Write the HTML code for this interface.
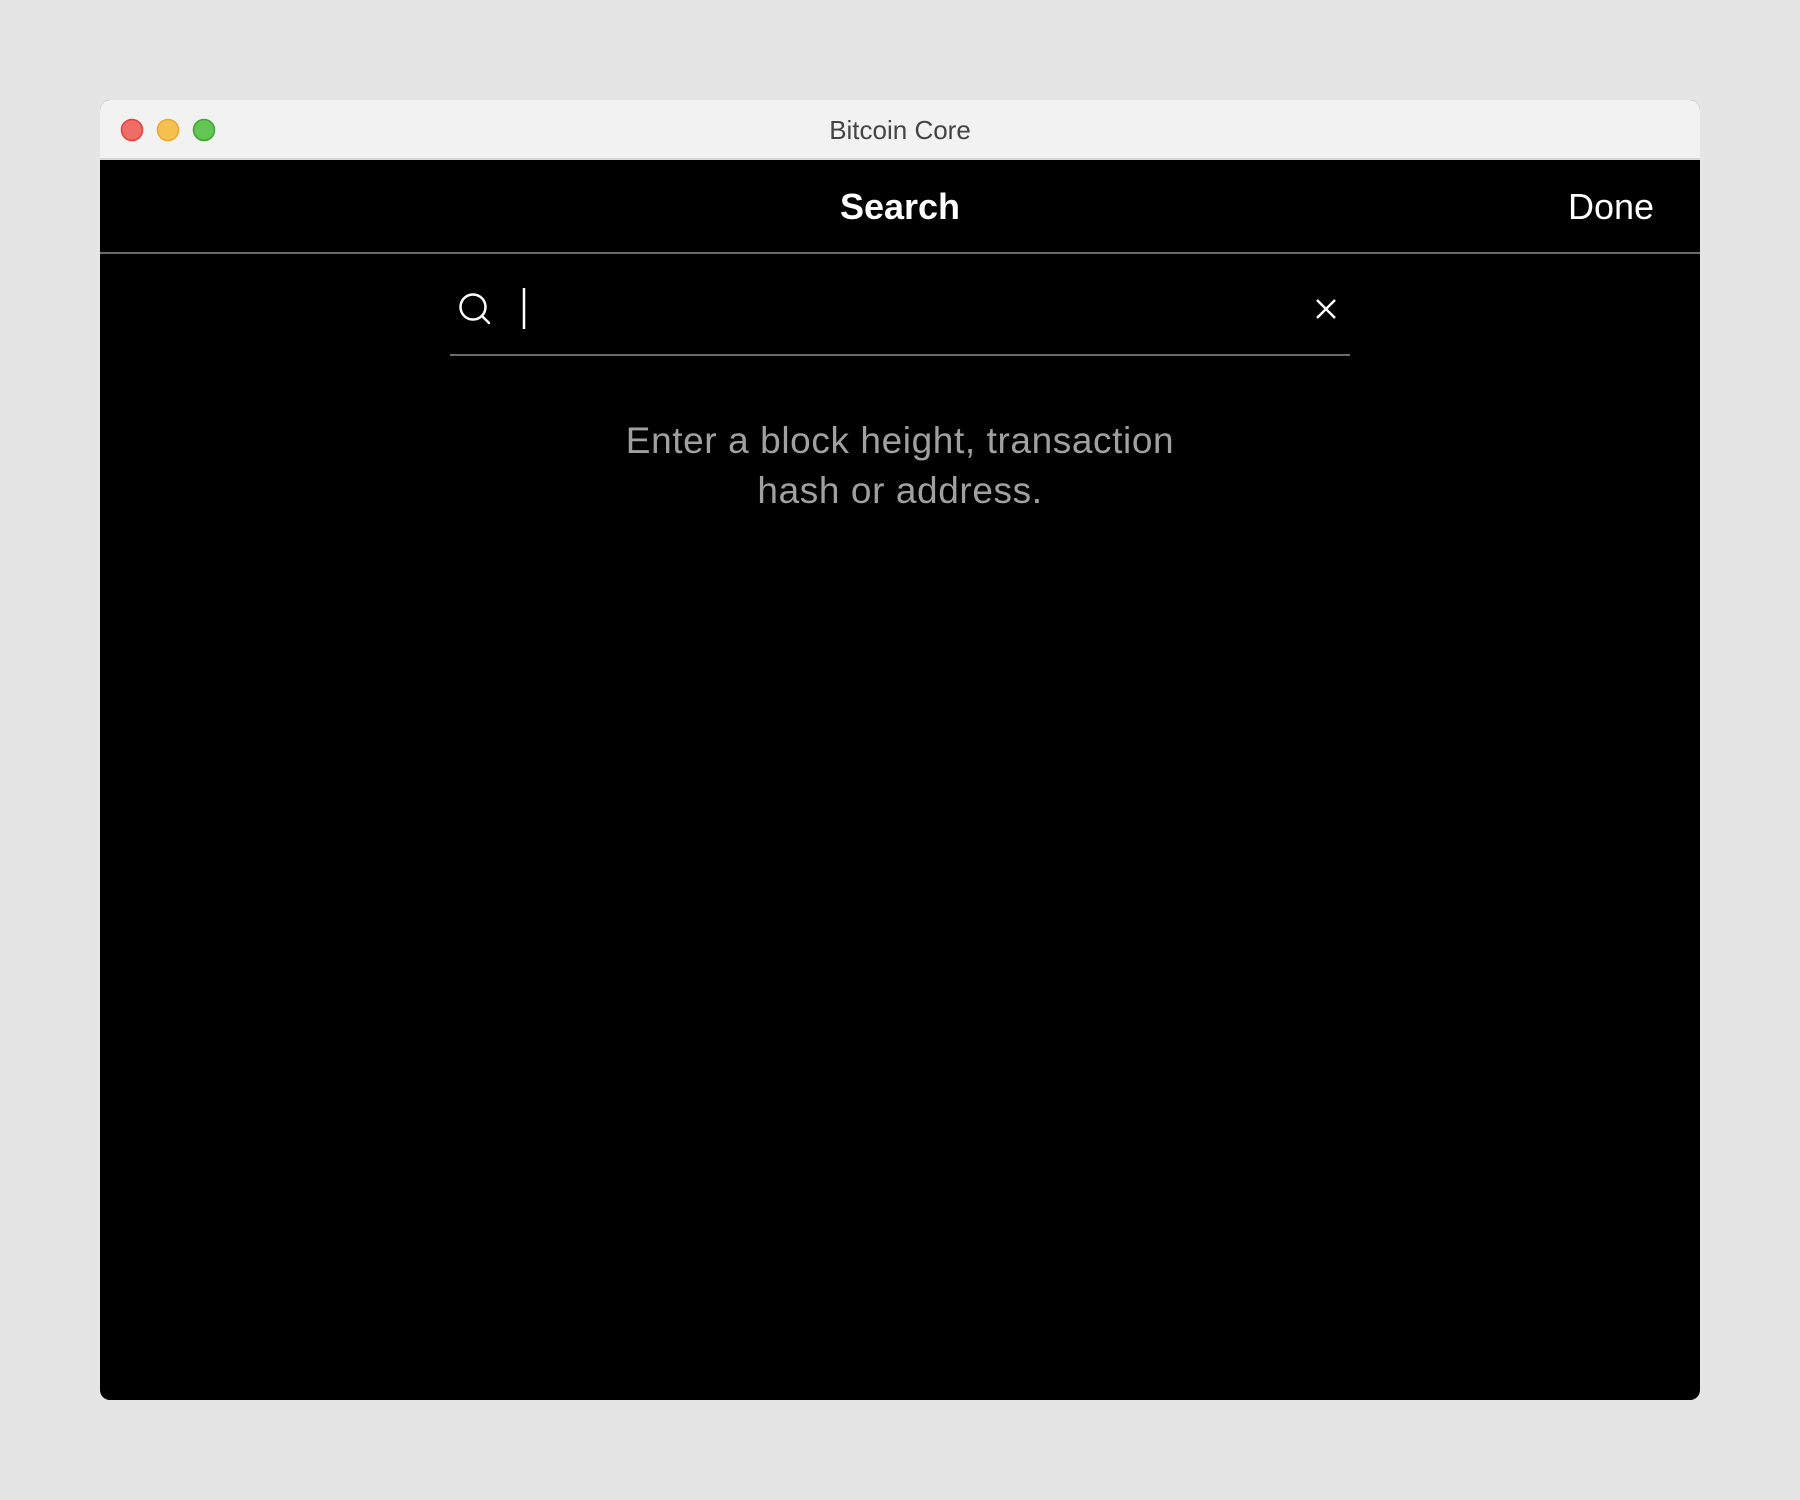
<!DOCTYPE html>
<html><head><style>
body{margin:0;width:1800px;height:1500px;background:#e5e5e5;font-family:"Liberation Sans",sans-serif;position:relative;overflow:hidden}
.win{position:absolute;left:100px;top:100px;width:1600px;height:1300px;background:#000;border-radius:10px;overflow:hidden}
.a{position:absolute}
</style></head><body>
<div class="win">
<div class="a" style="left:0;top:0;width:1600px;height:58px;background:#f1f2f1;border-bottom:2px solid #d6d6d6"></div>
<div class="a" style="left:0;top:15px;width:1600px;text-align:center;font-size:26px;color:#444">Bitcoin Core</div>
<div class="a" style="left:0;top:86px;width:1600px;text-align:center;color:#fff;font-weight:bold;font-size:36px">Search</div>
<div class="a" style="left:1468px;top:86px;color:#fff;font-size:36px">Done</div>
<div class="a" style="left:0;top:152px;width:1600px;height:2px;background:#6a6a6a"></div>
<div class="a" style="left:0;top:316px;width:1600px;text-align:center;color:#a0a0a0;font-size:37px;letter-spacing:0.6px;line-height:50px">Enter a block height, transaction<br>hash or address.</div>
</div>
<svg class="a" style="left:0;top:0" width="1800" height="400">
<circle cx="132" cy="130" r="10.5" fill="#f06d67" stroke="#e0403a" stroke-width="1.5"/>
<circle cx="168" cy="130" r="10.5" fill="#f7c151" stroke="#eea62b" stroke-width="1.5"/>
<circle cx="204" cy="130" r="10.5" fill="#62c554" stroke="#3aa630" stroke-width="1.5"/>
<circle cx="473" cy="307" r="12.5" fill="none" stroke="#fff" stroke-width="2.5"/>
<line x1="482" y1="316" x2="489" y2="323" stroke="#fff" stroke-width="2.5" stroke-linecap="round"/>
<line x1="524" y1="288" x2="524" y2="329" stroke="#fff" stroke-width="2.5"/>
<line x1="1317" y1="300" x2="1335" y2="318" stroke="#fff" stroke-width="2.5"/>
<line x1="1335" y1="300" x2="1317" y2="318" stroke="#fff" stroke-width="2.5"/>
<line x1="450" y1="355" x2="1350" y2="355" stroke="#6a6a6a" stroke-width="2"/>
</svg>
</body></html>
